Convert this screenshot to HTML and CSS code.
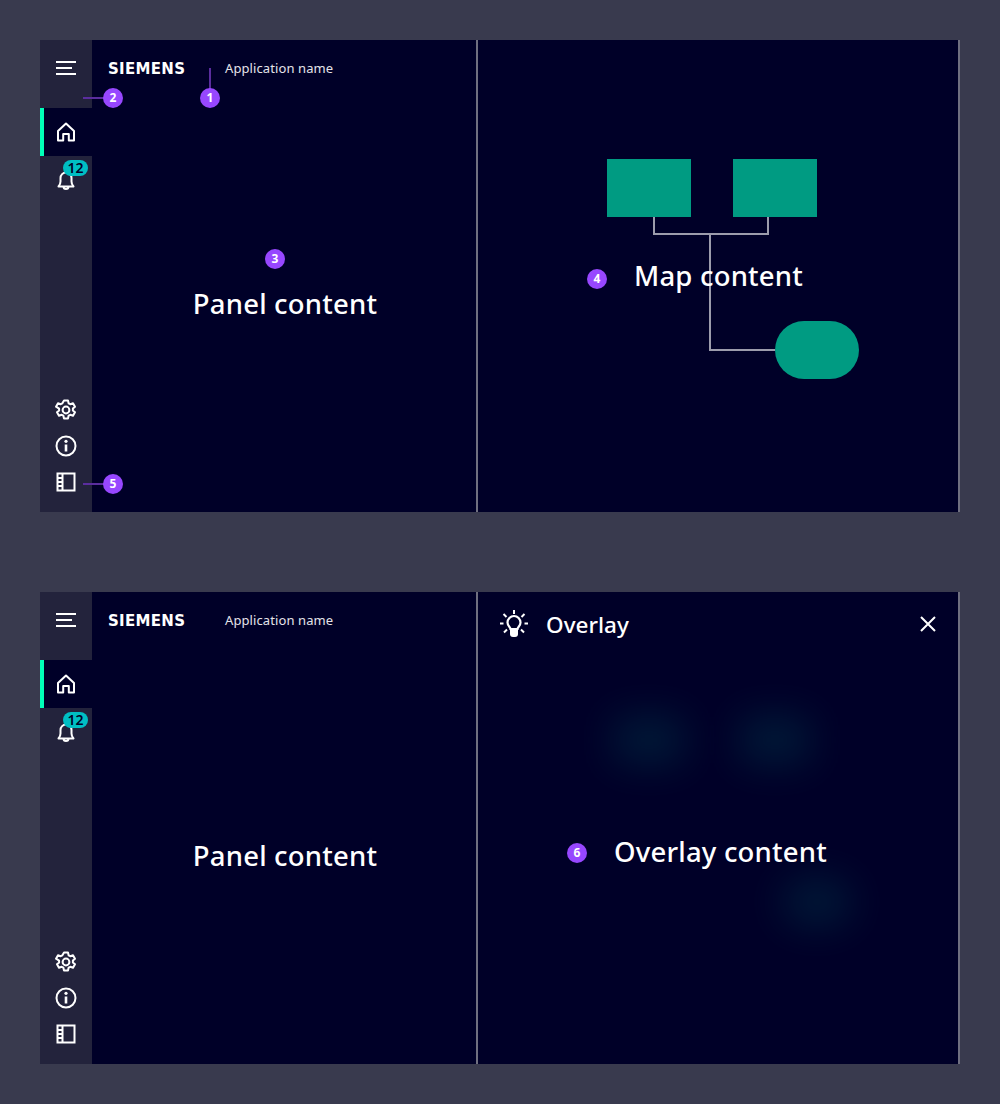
FILE: index.html
```html
<!DOCTYPE html>
<html>
    <head>
        <title>Overlay</title>
        <link rel="stylesheet" href="styles.css">
    </head>
    <body>
        <!--Iconos compartidos por las dos vistas-->
        <svg class="sprite">
            <symbol id="iconMenu" viewBox="0 0 20 14">
                <path d="M0 1h20M0 7h16M0 13h20" fill="none" stroke="currentColor" stroke-width="2"/>
            </symbol>
            <symbol id="iconHome" viewBox="0 0 24 24">
                <path d="M4 11 12 3.500 20 11v9.500h-5.200v-6.500H9.200v6.500H4Z" fill="none" stroke="currentColor" stroke-width="2" stroke-linejoin="round"/>
            </symbol>
            <symbol id="iconBell" viewBox="0 0 24 24">
                <path d="M4.500 18.500c1.300-1.500 2-3 2-5V10a5.500 5.500 0 0 1 11 0v3.500c0 2 .7 3.500 2 5ZM9.500 18.500a2.500 2.500 0 0 0 5 0" fill="none" stroke="currentColor" stroke-width="2" stroke-linejoin="round"/>
            </symbol>
            <symbol id="iconGear" viewBox="0 0 24 24">
                <circle cx="12" cy="12" r="3.400" fill="none" stroke="currentColor" stroke-width="2"/>
                <path d="M10 2.500h4l.6 2.800 1.700.9 2.700-.9 2 3.400-2.100 1.900v1.800l2.100 1.900-2 3.400-2.700-.9-1.700.9-.6 2.800h-4l-.6-2.800-1.700-.9-2.700.9-2-3.400 2.100-1.900v-1.800L2 8.700l2-3.400 2.700.9 1.700-.9Z" fill="none" stroke="currentColor" stroke-width="2" stroke-linejoin="round"/>
            </symbol>
            <symbol id="iconInfo" viewBox="0 0 24 24">
                <circle cx="12" cy="12" r="9.500" fill="none" stroke="currentColor" stroke-width="2"/>
                <path d="M12 10.500v7" fill="none" stroke="currentColor" stroke-width="2.600"/>
                <circle cx="12" cy="7.300" r="1.600" fill="currentColor"/>
            </symbol>
            <symbol id="iconFilm" viewBox="0 0 24 24">
                <path d="M3.500 3.500h17v17h-17ZM8.500 3.500v17" fill="none" stroke="currentColor" stroke-width="2"/>
                <path d="M4 7h4v2H4zM4 11h4v2H4zM4 15h4v2H4z" fill="currentColor"/>
            </symbol>
        </svg>

        <div class="page">
            <!--Primera vista: panel y mapa-->
            <section class="frame">
                <aside class="sidebar">
                    <div class="menuButton"><svg class="iconMenu"><use href="#iconMenu"/></svg></div>
                    <div class="navItem active"><svg class="icon"><use href="#iconHome"/></svg></div>
                    <div class="navItem">
                        <svg class="icon"><use href="#iconBell"/></svg>
                        <span class="badgeCount">12</span>
                    </div>
                    <div class="sidebarBottom">
                        <div class="toolItem"><svg class="icon"><use href="#iconGear"/></svg></div>
                        <div class="toolItem"><svg class="icon"><use href="#iconInfo"/></svg></div>
                        <div class="toolItem"><svg class="icon"><use href="#iconFilm"/></svg></div>
                    </div>
                </aside>
                <main class="panel">
                    <header class="brandBar">
                        <span class="logo">SIEMENS</span>
                        <span class="appName">Application name</span>
                    </header>
                    <div class="panelBody">Panel content</div>
                </main>
                <div class="mapArea">
                    <div class="node nodeLeft"></div>
                    <div class="node nodeRight"></div>
                    <div class="node nodePill"></div>
                    <svg class="wires" width="480" height="472">
                        <path d="M176 177v17h114v-17M232 194v116h65" fill="none" stroke="#9c9cac" stroke-width="2"/>
                    </svg>
                    <div class="bigText mapText">Map content</div>
                </div>

                <!--Marcas numeradas sobre la vista-->
                <span class="leader leaderUp"></span>
                <span class="leader leaderSide leaderTwo"></span>
                <span class="leader leaderSide leaderFive"></span>
                <span class="mark markOne">1</span>
                <span class="mark markTwo">2</span>
                <span class="mark markThree">3</span>
                <span class="mark markFour">4</span>
                <span class="mark markFive">5</span>
            </section>

            <!--Segunda vista: panel y overlay-->
            <section class="frame">
                <aside class="sidebar">
                    <div class="menuButton"><svg class="iconMenu"><use href="#iconMenu"/></svg></div>
                    <div class="navItem active"><svg class="icon"><use href="#iconHome"/></svg></div>
                    <div class="navItem">
                        <svg class="icon"><use href="#iconBell"/></svg>
                        <span class="badgeCount">12</span>
                    </div>
                    <div class="sidebarBottom">
                        <div class="toolItem"><svg class="icon"><use href="#iconGear"/></svg></div>
                        <div class="toolItem"><svg class="icon"><use href="#iconInfo"/></svg></div>
                        <div class="toolItem"><svg class="icon"><use href="#iconFilm"/></svg></div>
                    </div>
                </aside>
                <main class="panel">
                    <header class="brandBar">
                        <span class="logo">SIEMENS</span>
                        <span class="appName">Application name</span>
                    </header>
                    <div class="panelBody">Panel content</div>
                </main>
                <div class="mapArea">
                    <div class="glow glowLeft"></div>
                    <div class="glow glowRight"></div>
                    <div class="glow glowPill"></div>
                    <header class="overlayBar">
                        <svg class="iconBulb" viewBox="0 0 28 28">
                            <path d="M14 0v4M3.500 4 6.500 7M24.500 4 21.500 7M0 13.500h3.500M24.500 13.500H28M4 22.500 7 19.500M24 22.500 21 19.500" fill="none" stroke="currentColor" stroke-width="2"/>
                            <path d="M10.500 19c0-2-3-3-3-6.500a6.500 6.500 0 0 1 13 0c0 3.500-3 4.500-3 6.500Z" fill="none" stroke="currentColor" stroke-width="2.200"/>
                            <path d="M10 20h8v4a3 3 0 0 1-3 3h-2a3 3 0 0 1-3-3Z" fill="currentColor"/>
                        </svg>
                        <span class="overlayTitle">Overlay</span>
                        <svg class="iconClose" viewBox="0 0 16 16">
                            <path d="M1 1l14 14M15 1 1 15" fill="none" stroke="currentColor" stroke-width="2"/>
                        </svg>
                    </header>
                    <div class="bigText overlayText">Overlay content</div>
                </div>
                <span class="mark markSix">6</span>
            </section>
        </div>
    </body>
</html>
```

FILE: styles.css
```css
body
{
    margin: 0;
    background-color: #393a4e;
    color: #ffffff;
    font-family: "Noto Sans", sans-serif;
}
.sprite
{
    display: none;
}
.page
{
    display: flex;
    flex-direction: column;
    gap: 80px;
    padding: 40px;
}
.frame
{
    position: relative;
    display: flex;
    height: 472px;
    background-color: #000028;
}
.sidebar
{
    display: flex;
    flex-direction: column;
    width: 52px;
    background-color: #23233c;
}
.menuButton
{
    display: flex;
    align-items: center;
    justify-content: center;
    height: 56px;
    padding-bottom: 12px;
}
.iconMenu
{
    width: 20px;
    height: 14px;
}
.navItem
{
    position: relative;
    display: flex;
    align-items: center;
    justify-content: center;
    height: 48px;
}
.active
{
    background-color: #000028;
    box-shadow: inset 4px 0 0 #00ffb9;
}
.icon
{
    width: 24px;
    height: 24px;
}
.badgeCount
{
    position: absolute;
    top: 4px;
    left: 23px;
    width: 25px;
    height: 16px;
    border-radius: 8px;
    background-color: #00bec3;
    color: #000028;
    font-size: 14px;
    font-weight: 600;
    line-height: 16px;
    text-align: center;
}
.sidebarBottom
{
    margin-top: auto;
    padding-bottom: 12px;
}
.toolItem
{
    display: flex;
    align-items: center;
    justify-content: center;
    height: 36px;
}
.panel
{
    display: flex;
    flex-direction: column;
    width: 384px;
    border-right: 2px solid #6f6f80;
}
.brandBar
{
    display: flex;
    align-items: center;
    height: 56px;
    padding-left: 16px;
}
.logo
{
    width: 117px;
    padding-top: 1px;
    font-family: "DejaVu Sans", sans-serif;
    font-size: 15px;
    font-weight: 700;
    letter-spacing: 0.3px;
}
.appName
{
    color: #e4e4ea;
    font-size: 13px;
    letter-spacing: 0.1px;
}
.panelBody
{
    flex: 1;
    padding-top: 188px;
    padding-left: 2px;
    font-size: 27.500px;
    font-weight: 550;
    letter-spacing: 0.2px;
    line-height: 40px;
    text-align: center;
}
.mapArea
{
    position: relative;
    width: 480px;
    border-right: 2px solid #6f6f80;
    overflow: hidden;
}
.node
{
    position: absolute;
    width: 84px;
    height: 58px;
    background-color: #009b82;
}
.nodeLeft
{
    left: 129px;
    top: 119px;
}
.nodeRight
{
    left: 255px;
    top: 119px;
}
.nodePill
{
    left: 297px;
    top: 281px;
    border-radius: 29px;
}
.wires
{
    position: absolute;
    left: 0;
    top: 0;
}
.bigText
{
    position: absolute;
    font-size: 27.500px;
    font-weight: 550;
    letter-spacing: 0.2px;
    line-height: 40px;
    white-space: nowrap;
}
.mapText
{
    left: 156px;
    top: 216px;
}
.overlayText
{
    left: 136px;
    top: 240px;
}
.glow
{
    position: absolute;
    width: 70px;
    height: 46px;
    background-color: #003c4c;
    filter: blur(20px);
    opacity: 0.45;
}
.glowLeft
{
    left: 136px;
    top: 125px;
}
.glowRight
{
    left: 262px;
    top: 125px;
}
.glowPill
{
    left: 304px;
    top: 287px;
    border-radius: 23px;
}
.overlayBar
{
    position: relative;
    display: flex;
    align-items: center;
    height: 64px;
    padding: 0 22px;
}
.iconBulb
{
    width: 28px;
    height: 28px;
}
.overlayTitle
{
    margin-left: 18px;
    font-size: 22.500px;
    font-weight: 550;
}
.iconClose
{
    width: 16px;
    height: 16px;
    margin-left: auto;
}
/*Marcas numeradas*/
.mark
{
    position: absolute;
    width: 20px;
    height: 20px;
    border-radius: 50%;
    background-color: #9747ff;
    font-size: 12px;
    font-weight: 700;
    line-height: 20px;
    text-align: center;
}
.markOne { left: 160px; top: 48px; }
.markTwo { left: 63px; top: 48px; }
.markThree { left: 225px; top: 209px; }
.markFour { left: 547px; top: 229px; }
.markFive { left: 63px; top: 434px; }
.markSix { left: 527px; top: 251px; }
.leader
{
    position: absolute;
    background-color: #5a2d9e;
}
.leaderUp
{
    left: 169px;
    top: 28px;
    width: 2px;
    height: 22px;
}
.leaderSide
{
    left: 43px;
    width: 22px;
    height: 2px;
}
.leaderTwo { top: 57px; }
.leaderFive { top: 443px; }
```
